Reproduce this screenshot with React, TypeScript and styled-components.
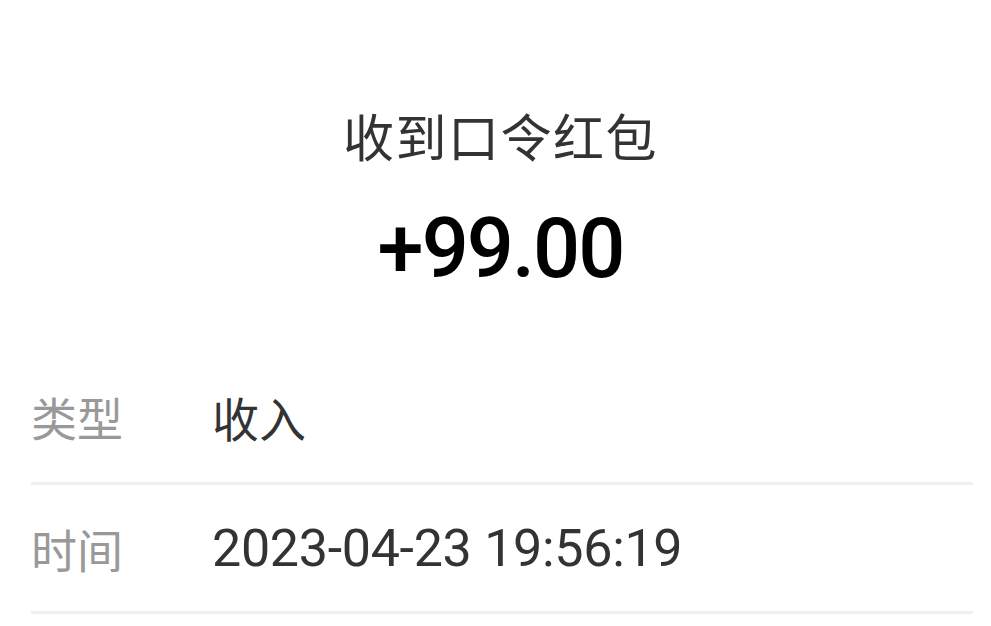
import styled, { createGlobalStyle } from "styled-components"

const GlobalStyle = createGlobalStyle`
  html, body {
    margin: 0;
    padding: 0;
    background: #ffffff;
  }
  body {
    font-family: Roboto, "Noto Sans CJK SC", sans-serif;
  }
`

const Page = styled.div`
  width: 991px;
  height: 626px;
  overflow: hidden;
  background: #ffffff;
  display: flex;
  flex-direction: column;
`

const Header = styled.div`
  display: flex;
  flex-direction: column;
  align-items: center;
  padding: 101px 0 0 10px;
`

const Title = styled.div`
  font-family: "Noto Sans CJK SC", sans-serif;
  font-size: 51px;
  line-height: 68px;
  color: #333333;
  letter-spacing: 1.5px;
`

const Amount = styled.div`
  font-family: Roboto, sans-serif;
  font-size: 83px;
  font-weight: 500;
  line-height: 100px;
  letter-spacing: -2px;
  margin-top: 30px;
  color: #000000;
`

const List = styled.ul`
  list-style: none;
  margin: 57px 18px 0 31px;
  padding: 0;
`

const Row = styled.li`
  display: flex;
  align-items: center;
  height: 129px;
  padding-bottom: 6px;
  border-bottom: 3px solid #efefef;
  box-sizing: border-box;

  & + & {
    padding-bottom: 0;
  }
`

const Label = styled.span`
  width: 181px;
  flex-shrink: 0;
  font-family: "Noto Sans CJK SC", sans-serif;
  font-size: 46px;
  color: #999999;
`

const Value = styled.span<{ $numeric?: boolean }>`
  font-family: ${({ $numeric }) =>
    $numeric ? "Roboto, sans-serif" : `"Noto Sans CJK SC", sans-serif`};
  font-size: ${({ $numeric }) => ($numeric ? "52px" : "47px")};
  letter-spacing: ${({ $numeric }) => ($numeric ? "-0.3px" : "0")};
  color: #333333;
`

type DetailProps = {
  label: string
  value: string
  numeric?: boolean
}

const Detail = ({ label, value, numeric }: DetailProps) => (
  <Row>
    <Label>{label}</Label>
    <Value $numeric={numeric}>{value}</Value>
  </Row>
)

const App = () => {
  return (
    <Page>
      <GlobalStyle />
      <Header>
        <Title>收到口令红包</Title>
        <Amount>+99.00</Amount>
      </Header>
      <List>
        <Detail label="类型" value="收入" />
        <Detail label="时间" value="2023-04-23 19:56:19" numeric />
      </List>
    </Page>
  )
}

export default App
